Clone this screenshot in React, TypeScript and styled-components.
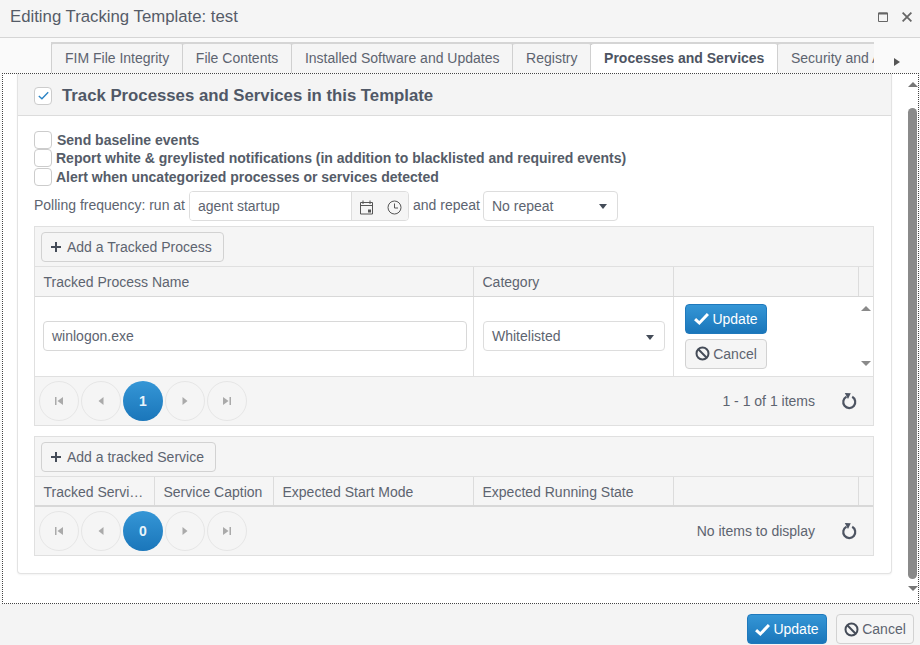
import React from "react";
import styled, { createGlobalStyle } from "styled-components";

const Global = createGlobalStyle`
  html, body { margin: 0; padding: 0; background: #fff; }
  * { box-sizing: border-box; }
  body { font-family: "Liberation Sans", Arial, sans-serif; font-size: 14px; color: #515967; }
`;

const Window = styled.div`
  width: 920px; height: 645px; display: flex; flex-direction: column; overflow: hidden; background: #fafafa;
`;
const TitleBar = styled.header`
  height: 38px; flex: none; display: flex; align-items: center; justify-content: space-between;
  padding: 0 8px 4px 10px; background: #f5f5f5; border-bottom: 1px solid #d5d5d5;
  font-size: 16.75px; color: #555c68;
`;
const TitleActions = styled.div`display: flex; align-items: center; gap: 14px; color: #777;`;
const TabStrip = styled.nav`
  height: 35px; flex: none; display: flex; padding: 4px 0 0 51px; position: relative;
`;
const TabClip = styled.div`
  width: 823px; height: 31px; overflow: hidden; display: flex; border-top: 2px solid #d5d5d5; flex: none;
`;
const Tab = styled.div<{ $active?: boolean; $first?: boolean }>`
  flex: none; height: 31px; margin-top: -2px; padding: 0 12.6px 0 13px; line-height: 29px; white-space: nowrap;
  border-top: 2px solid ${p => (p.$active ? "#a9a9a9" : "#d5d5d5")};
  border-right: 1px solid #d0d0d0;
  border-left: ${p => (p.$first ? "1px solid #d0d0d0" : "none")};
  border-radius: 3px 3px 0 0;
  background: ${p => (p.$active ? "#fff" : "#f5f5f5")};
  font-weight: ${p => (p.$active ? 700 : 400)};
  color: ${p => (p.$active ? "#4d5462" : "#5d6470")};
`;
const TabArrow = styled.span`margin: 16px 0 0 20px; display: block; width: 0; height: 0;
  border-left: 6px solid #555; border-top: 4px solid transparent; border-bottom: 4px solid transparent;`;
const Frame = styled.main`
  height: 531px; flex: none; margin: 0 1px 0 2px; display: flex; background: #fff;
  border: 1px dotted #444;
`;
const Panel = styled.section`
  margin-left: 14px; width: 875px; height: 500px; flex: none; background: #fff;
  border: 1px solid #e3e3e3; border-top: none; border-radius: 0 0 4px 4px; box-shadow: 0 1px 2px rgba(0,0,0,.05);
`;
const PanelHead = styled.div`
  height: 42px; display: flex; align-items: center; gap: 10px; padding: 2px 0 0 16px;
  background: #f4f4f4; border-bottom: 1px solid #dcdcdc;
  font-size: 16.75px; font-weight: 700; color: #505866;
`;
const Box = styled.span<{ $checked?: boolean }>`
  width: 18px; height: 18px; flex: none; display: inline-flex; align-items: center; justify-content: center;
  background: #fff; border: 1px solid #ccc; border-radius: 4px; color: #2a83c5;
`;
const PanelBody = styled.div`padding: 15px 16px 0 16px;`;
const CheckRow = styled.label<{ $gap: number }>`
  height: 18.3px; display: flex; align-items: center; gap: ${p => p.$gap}px; font-weight: 700; color: #555c68; white-space: nowrap;
`;
const PollRow = styled.div`
  margin-top: 5.1px; height: 30px; display: flex; align-items: center; color: #5d6470; white-space: nowrap;
`;
const PollLabel = styled.span<{ $l: number; $r: number }>`margin: -2px ${p => p.$r}px 0 ${p => p.$l}px;`;
const InputGroup = styled.div`
  width: 220px; height: 30px; display: flex; border: 1px solid #ddd; border-radius: 4px; overflow: hidden;
`;
const InputText = styled.div`flex: 1; padding-left: 8px; line-height: 28px; background: #fff; color: #5d6470;`;
const InputIcons = styled.div`
  width: 57px; display: flex; align-items: center; gap: 13px; padding: 3px 0 0 7px; background: #f5f5f5; border-left: 1px solid #ddd; color: #555;
`;
const Select = styled.div<{ $w: number }>`
  width: ${p => p.$w}px; height: 30px; flex: none; display: flex; align-items: center; justify-content: space-between;
  padding: 0 10px 0 8px; background: #fff; border: 1px solid #ddd; border-radius: 4px; color: #5d6470;
`;
const Caret = styled.span`
  display: block; width: 0; height: 0; margin-top: 2px;
  border-top: 5px solid #444c58; border-left: 4.5px solid transparent; border-right: 4.5px solid transparent;
`;
const Grid = styled.div<{ $top: number }>`
  margin-top: ${p => p.$top}px; width: 840px; border: 1px solid #e0e0e0; background: #fff;
`;
const Toolbar = styled.div`
  height: 40px; padding: 5px 6px 0; background: #f5f5f5; border-bottom: 1px solid #e0e0e0;
`;
const Button = styled.button<{ $primary?: boolean; $w: number }>`
  width: ${p => p.$w}px; height: 30px; display: inline-flex; align-items: center; justify-content: center; gap: 3px; padding: 0;
  font: 14px "Liberation Sans", Arial, sans-serif; border-radius: 4px; white-space: nowrap;
  color: ${p => (p.$primary ? "#fff" : "#5d6470")};
  border: 1px solid ${p => (p.$primary ? "#1f79bc" : "#d2d2d2")};
  background: ${p => (p.$primary ? "linear-gradient(#3596d6, #1a76ba)" : "#f5f5f5")};
`;
const AddButton = styled(Button)`gap: 5px; justify-content: flex-start; padding-left: 8px;`;
const HeadRow = styled.div<{ $cols: string; $line: number }>`
  display: grid; grid-template-columns: ${p => p.$cols}; height: 30px;
  background: #f5f5f5; border-bottom: ${p => p.$line}px solid #d8d8d8;
`;
const HeadCell = styled.div`
  padding: 0 0 0 8.5px; line-height: 31px; border-right: 1px solid #dcdcdc; color: #5d6470; white-space: nowrap; overflow: hidden;
  &:last-child { border-right: none; }
`;
const EllipsisCell = styled(HeadCell)`text-overflow: ellipsis; padding-right: 8px;`;
const BodyRow = styled.div`
  display: grid; grid-template-columns: 439px 200px 185px 14px; height: 80px; border-bottom: 1px solid #e0e0e0;
`;
const BodyCell = styled.div`
  display: flex; flex-direction: column; justify-content: center; gap: 5px; border-right: 1px solid #e0e0e0; padding: 0 6px 0 8px;
`;
const CategoryCell = styled(BodyCell)`padding: 0 8px 0 9px;`;
const ActionCell = styled(BodyCell)`border-right: none; padding: 0 0 0 11px;`;
const RowScroll = styled.div`display: flex; flex-direction: column; justify-content: space-between; align-items: center; padding: 9px 0 10px;`;
const TextInput = styled.div`
  height: 30px; padding-left: 8px; line-height: 28px; border: 1px solid #d8d8d8; border-radius: 4px; color: #5d6470;
`;
const Pager = styled.div`
  height: 48px; padding: 0 16px 0 4px; display: flex; align-items: center; background: #f5f5f5; color: #5d6470;
`;
const PageButtons = styled.div`display: flex; gap: 2px; flex: 1;`;
const PageBtn = styled.span<{ $current?: boolean }>`
  width: 40px; height: 40px; border-radius: 50%; display: flex; align-items: center; justify-content: center;
  font-weight: 700; color: ${p => (p.$current ? "#e9f4fb" : "#aaa")};
  border: ${p => (p.$current ? "none" : "1px solid #e6e6e6")};
  background: ${p => (p.$current ? "linear-gradient(#3596d6, #1a76ba)" : "transparent")};
`;
const PagerInfo = styled.span`margin-right: 26px;`;
const Scrollbar = styled.aside`
  width: 11px; margin-left: 15px; flex: none; display: flex; flex-direction: column; align-items: center; padding: 8px 0 0;
`;
const Thumb = styled.div`width: 9px; height: 471px; margin: 21px 0 7px; border-radius: 5px; background: #8a8a8a; flex: none;`;
const ArrowUp = styled.span<{ $c?: string }>`
  display: block; width: 0; height: 0; flex: none;
  border-bottom: 5px solid ${p => p.$c || "#8a8a8a"}; border-left: 5px solid transparent; border-right: 5px solid transparent;
`;
const ArrowDown = styled.span<{ $c?: string }>`
  display: block; width: 0; height: 0; flex: none;
  border-top: 5px solid ${p => p.$c || "#8a8a8a"}; border-left: 5px solid transparent; border-right: 5px solid transparent;
`;
const Footer = styled.footer`
  flex: 1; display: flex; justify-content: flex-end; gap: 9px; padding: 10px 6px 0 0; background: #f4f4f4;
`;

const Check = ({ size = 15, w = 2.8 }: { size?: number; w?: number }) => (
  <svg width={size} height={size} viewBox="0 0 14 14" fill="none"><path d="M1 7.5 5 11.2 13 2.8" stroke="currentColor" strokeWidth={w} /></svg>
);
const Ban = () => (
  <svg width="15" height="15" viewBox="0 0 15 15" fill="none" stroke="#454c58" strokeWidth="2"><circle cx="7.5" cy="7.5" r="6" /><path d="M3.3 3.3 11.7 11.7" /></svg>
);
const Plus = () => (
  <svg width="12" height="12" viewBox="0 0 12 12" fill="none" stroke="#454c58" strokeWidth="2"><path d="M6 1v10M1 6h10" /></svg>
);
const Refresh = () => (
  <svg width="16" height="18" viewBox="0 0 16 18"><path d="M5.5 4.7A6 6 0 1 0 11.2 4.8" fill="none" stroke="#4d5462" strokeWidth="2.2" /><path d="M3.8 1 9.8 1.3 7 7Z" fill="#4d5462" /></svg>
);
const Calendar = () => (
  <svg width="15" height="15" viewBox="0 0 15 15" fill="none" stroke="#555" strokeWidth="1"><path d="M1.5 2.5h12v11.5h-12zM1.5 5.5h12M4 .5v3.500M11 .5v3.500" /><rect x="9" y="9.5" width="3" height="3" fill="#555" stroke="none" /></svg>
);
const Clock = () => (
  <svg width="15" height="15" viewBox="0 0 15 15" fill="none" stroke="#555" strokeWidth="1"><circle cx="7.5" cy="7.5" r="6.5" /><path d="M7.5 3.5v4.5h3.5" /></svg>
);
const First = () => (
  <svg width="10" height="10" viewBox="0 0 10 10" fill="#aaa"><path d="M1 1h1.5v8H1zM9 1v8L3.5 5z" /></svg>
);
const Last = () => (
  <svg width="10" height="10" viewBox="0 0 10 10" fill="#aaa"><path d="M9 1H7.5v8H9zM1 1v8l5.5-4z" /></svg>
);
const Prev = () => (
  <svg width="10" height="10" viewBox="0 0 10 10" fill="#aaa"><path d="M7.5 1v8L2.5 5z" /></svg>
);
const Next = () => (
  <svg width="10" height="10" viewBox="0 0 10 10" fill="#aaa"><path d="M2.5 1v8l5-4z" /></svg>
);
const Maximize = () => (
  <svg width="10" height="10" viewBox="0 0 10 10" fill="none" stroke="#666"><path d="M.5 1h9v8.500h-9z" /><path d="M.5 1.500h9" strokeWidth="2" /></svg>
);
const Close = () => (
  <svg width="10" height="10" viewBox="0 0 10 10" fill="none" stroke="#666" strokeWidth="1.8"><path d="M.6.6l8.800 8.800M9.400.6.6 9.400" /></svg>
);

const PagerBar = ({ page, info }: { page: string; info: string }) => (
  <Pager>
    <PageButtons>
      <PageBtn><First /></PageBtn>
      <PageBtn><Prev /></PageBtn>
      <PageBtn $current>{page}</PageBtn>
      <PageBtn><Next /></PageBtn>
      <PageBtn><Last /></PageBtn>
    </PageButtons>
    <PagerInfo>{info}</PagerInfo>
    <Refresh />
  </Pager>
);

export default function App() {
  return (
    <Window>
      <Global />
      <TitleBar>
        <span>Editing Tracking Template: test</span>
        <TitleActions><Maximize /><Close /></TitleActions>
      </TitleBar>
      <TabStrip>
        <TabClip>
          <Tab $first>FIM File Integrity</Tab>
          <Tab>File Contents</Tab>
          <Tab>Installed Software and Updates</Tab>
          <Tab>Registry</Tab>
          <Tab $active>Processes and Services</Tab>
          <Tab>Security and Access</Tab>
        </TabClip>
        <TabArrow />
      </TabStrip>
      <Frame>
        <Panel>
          <PanelHead>
            <Box $checked><Check size={11} w={1.7} /></Box>
            Track Processes and Services in this Template
          </PanelHead>
          <PanelBody>
            <CheckRow $gap={5}><Box />Send baseline events</CheckRow>
            <CheckRow $gap={4}><Box />Report white &amp; greylisted notifications (in addition to blacklisted and required events)</CheckRow>
            <CheckRow $gap={4}><Box />Alert when uncategorized processes or services detected</CheckRow>
            <PollRow>
              <PollLabel $l={0} $r={4}>Polling frequency: run at</PollLabel>
              <InputGroup>
                <InputText>agent startup</InputText>
                <InputIcons><Calendar /><Clock /></InputIcons>
              </InputGroup>
              <PollLabel $l={4} $r={3}>and repeat</PollLabel>
              <Select $w={135}>No repeat<Caret /></Select>
            </PollRow>
            <Grid $top={5}>
              <Toolbar><AddButton $w={183}><Plus />Add a Tracked Process</AddButton></Toolbar>
              <HeadRow $cols="439px 200px 185px 14px" $line={1}>
                <HeadCell>Tracked Process Name</HeadCell>
                <HeadCell>Category</HeadCell>
                <HeadCell />
                <HeadCell />
              </HeadRow>
              <BodyRow>
                <BodyCell><TextInput>winlogon.exe</TextInput></BodyCell>
                <CategoryCell><Select $w={182}>Whitelisted<Caret /></Select></CategoryCell>
                <ActionCell>
                  <Button $primary $w={82}><Check />Update</Button>
                  <Button $w={82}><Ban />Cancel</Button>
                </ActionCell>
                <RowScroll><ArrowUp /><ArrowDown /></RowScroll>
              </BodyRow>
              <PagerBar page="1" info="1 - 1 of 1 items" />
            </Grid>
            <Grid $top={10}>
              <Toolbar><AddButton $w={175}><Plus />Add a tracked Service</AddButton></Toolbar>
              <HeadRow $cols="120px 119px 200px 200px 185px 14px" $line={2}>
                <EllipsisCell>Tracked Service Name</EllipsisCell>
                <HeadCell>Service Caption</HeadCell>
                <HeadCell>Expected Start Mode</HeadCell>
                <HeadCell>Expected Running State</HeadCell>
                <HeadCell />
                <HeadCell />
              </HeadRow>
              <PagerBar page="0" info="No items to display" />
            </Grid>
          </PanelBody>
        </Panel>
        <Scrollbar>
          <ArrowUp $c="#777" />
          <Thumb />
          <ArrowDown $c="#777" />
        </Scrollbar>
      </Frame>
      <Footer>
        <Button $primary $w={80}><Check />Update</Button>
        <Button $w={78}><Ban />Cancel</Button>
      </Footer>
    </Window>
  );
}
